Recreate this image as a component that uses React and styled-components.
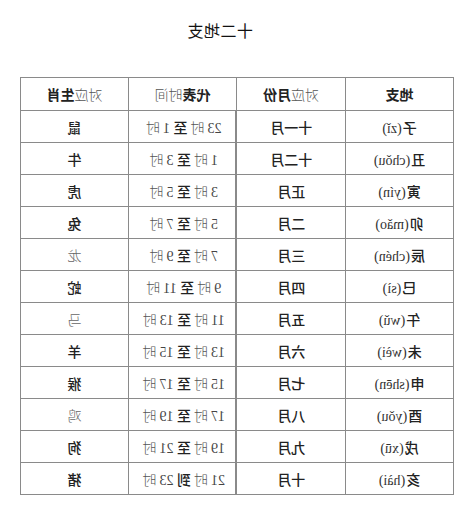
import React from "react";
import styled, { createGlobalStyle } from "styled-components";

const Global = createGlobalStyle`
  html, body { margin: 0; padding: 0; background: #fff; }
  body { font-family: "Noto Sans CJK SC", "Liberation Serif", serif; color: #222; }
`;

const Page = styled.div`
  width: 474px;
  height: 519px;
  background: #fff;
  transform: scaleX(-1);
  display: flex;
  flex-direction: column;
  align-items: center;
  padding-top: 18px;
  box-sizing: border-box;
`;

const Title = styled.h1`
  margin: 0 0 0 34px;
  font-family: "Noto Sans CJK SC", sans-serif;
  font-size: 16px;
  font-weight: 400;
  line-height: 24px;
  color: #111;
  letter-spacing: 0.5px;
`;

const Table = styled.table`
  margin-top: 35px;
  border-collapse: collapse;
  table-layout: fixed;
  width: 433px;
`;

const Col = styled.col`
  width: ${(p) => p.$w}px;
`;

const HeadCell = styled.th`
  height: 32px;
  border: 1px solid #8a8a8a;
  font-family: "Noto Sans CJK SC", sans-serif;
  font-size: 14px;
  font-weight: 700;
  color: #222;
  text-align: center;
  padding: 0;
`;

const Cell = styled.td`
  height: 31px;
  border: 1px solid #8a8a8a;
  border-left-width: ${(p) => (p.$thick ? 2 : 1)}px;
  font-family: "Noto Sans CJK SC", sans-serif;
  font-size: 14px;
  font-weight: 500;
  color: #222;
  text-align: center;
  padding: 0;
  white-space: nowrap;
`;

const Light = styled.span`
  font-weight: 300;
  color: #555;
`;

const Serif = styled.span`
  font-family: "Liberation Serif", "Noto Sans CJK SC", serif;
  font-weight: 400;
  color: #444;
  font-size: 14px;
`;

const Pinyin = styled.span`
  font-family: "Liberation Serif", serif;
  font-weight: 400;
  color: #333;
  font-size: 14px;
  margin-left: 1px;
`;

const Hour = styled.span`
  font-weight: 300;
  color: #555;
  margin: 0 3px;
`;

const Zodiac = styled.span`
  font-weight: ${(p) => (p.$light ? 300 : 500)};
  color: ${(p) => (p.$light ? "#666" : "#222")};
`;

const rows = [
  ["子", "zǐ", "十一月", "23", "1", "至", "鼠", false],
  ["丑", "chǒu", "十二月", "1", "3", "至", "牛", false],
  ["寅", "yín", "正月", "3", "5", "至", "虎", false],
  ["卯", "mǎo", "二月", "5", "7", "至", "兔", false],
  ["辰", "chén", "三月", "7", "9", "至", "龙", true],
  ["巳", "sì", "四月", "9", "11", "至", "蛇", false],
  ["午", "wǔ", "五月", "11", "13", "至", "马", true],
  ["未", "wèi", "六月", "13", "15", "至", "羊", false],
  ["申", "shēn", "七月", "15", "17", "至", "猴", false],
  ["酉", "yǒu", "八月", "17", "19", "至", "鸡", true],
  ["戌", "xū", "九月", "19", "21", "至", "狗", false],
  ["亥", "hài", "十月", "21", "23", "到", "猪", false],
];

export default function App() {
  return (
    <>
      <Global />
      <Page>
        <Title>十二地支</Title>
        <Table>
          <colgroup>
            <Col $w={108} />
            <Col $w={109} />
            <Col $w={108} />
            <Col $w={108} />
          </colgroup>
          <thead>
            <tr>
              <HeadCell>地支</HeadCell>
              <HeadCell>
                <Light>对应</Light>月份
              </HeadCell>
              <HeadCell>
                代表<Light>时间</Light>
              </HeadCell>
              <HeadCell>
                <Light>对应</Light>生肖
              </HeadCell>
            </tr>
          </thead>
          <tbody>
            {rows.map(([b, py, m, h1, h2, to, z, light]) => (
              <tr key={b}>
                <Cell>
                  {b}
                  <Pinyin>({py})</Pinyin>
                </Cell>
                <Cell>{m}</Cell>
                <Cell $thick>
                  <Serif>{h1}</Serif>
                  <Hour>时</Hour>
                  {to}
                  <Serif> {h2}</Serif>
                  <Hour>时</Hour>
                </Cell>
                <Cell>
                  <Zodiac $light={light}>{z}</Zodiac>
                </Cell>
              </tr>
            ))}
          </tbody>
        </Table>
      </Page>
    </>
  );
}
